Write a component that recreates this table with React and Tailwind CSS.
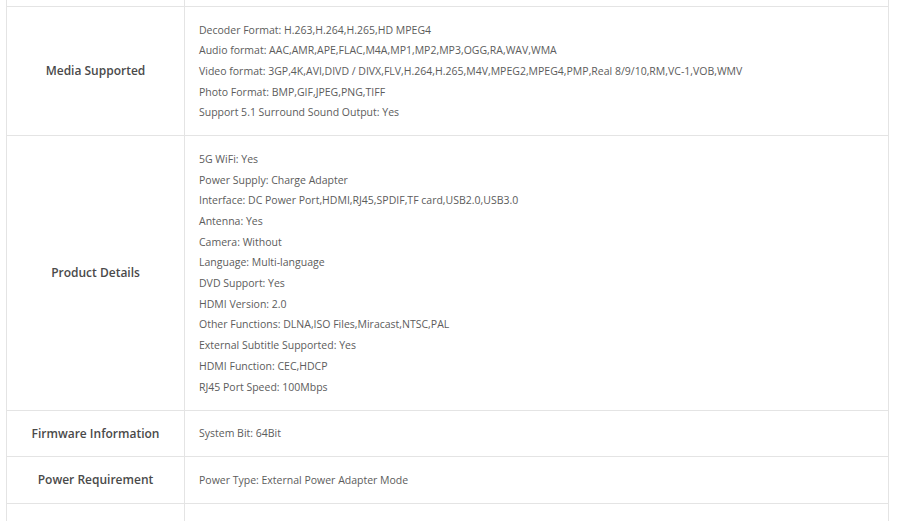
const SPECS = [
  {
    label: 'Media Supported',
    items: [
      'Decoder Format: H.263,H.264,H.265,HD MPEG4',
      'Audio format: AAC,AMR,APE,FLAC,M4A,MP1,MP2,MP3,OGG,RA,WAV,WMA',
      'Video format: 3GP,4K,AVI,DIVD / DIVX,FLV,H.264,H.265,M4V,MPEG2,MPEG4,PMP,Real 8/9/10,RM,VC-1,VOB,WMV',
      'Photo Format: BMP,GIF,JPEG,PNG,TIFF',
      'Support 5.1 Surround Sound Output: Yes',
    ],
  },
  {
    label: 'Product Details',
    items: [
      '5G WiFi: Yes',
      'Power Supply: Charge Adapter',
      'Interface: DC Power Port,HDMI,RJ45,SPDIF,TF card,USB2.0,USB3.0',
      'Antenna: Yes',
      'Camera: Without',
      'Language: Multi-language',
      'DVD Support: Yes',
      'HDMI Version: 2.0',
      'Other Functions: DLNA,ISO Files,Miracast,NTSC,PAL',
      'External Subtitle Supported: Yes',
      'HDMI Function: CEC,HDCP',
      'RJ45 Port Speed: 100Mbps',
    ],
  },
  { label: 'Firmware Information', items: ['System Bit: 64Bit'] },
  { label: 'Power Requirement', items: ['Power Type: External Power Adapter Mode'] },
];

function SpecRow({ label, items }) {
  return (
    <div className="flex border-b border-[#e4e4e4]">
      <div className="w-[178px] shrink-0 border-r border-[#e4e4e4] flex items-center justify-center text-[12px] font-semibold text-[#4a4a4a]">
        {label}
      </div>
      <div className="flex-1 pl-[14px] py-[12.5px] text-[10.5px] leading-[20.7px] text-[#5c5c5c]">
        {items.map((t) => (
          <div key={t} className="h-[20.7px]">{t}</div>
        ))}
      </div>
    </div>
  );
}

export default function App() {
  return (
    <div
      className="h-[521px] overflow-hidden bg-white"
      style={{ fontFamily: '"Open Sans", "Noto Sans", sans-serif' }}
    >
      <div className="ml-[6px] w-[883px] border-x border-[#e4e4e4]">
        {/* tail of the row above */}
        <div className="flex h-[7px] border-b border-[#e4e4e4]">
          <div className="w-[178px] border-r border-[#e4e4e4]" />
        </div>
        {SPECS.map((row) => (
          <SpecRow key={row.label} {...row} />
        ))}
        <div className="flex h-[40px]">
          <div className="w-[178px] border-r border-[#e4e4e4]" />
        </div>
      </div>
    </div>
  );
}
